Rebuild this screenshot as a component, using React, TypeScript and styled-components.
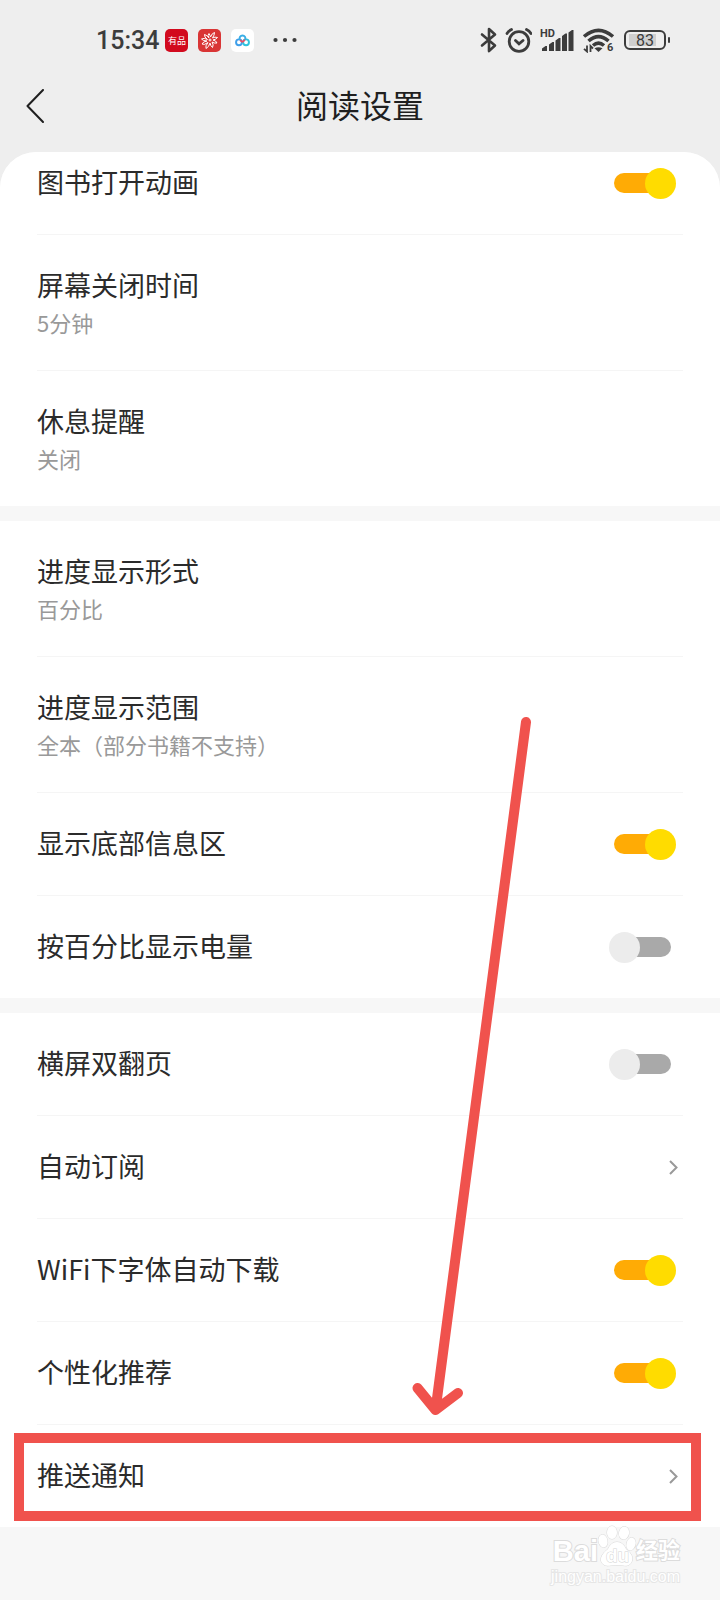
import React, { useState } from "react";
import styled, { createGlobalStyle } from "styled-components";

const GlobalStyle = createGlobalStyle`
  *, *::before, *::after { box-sizing: border-box; }
  body {
    margin: 0;
    background: #eeeeee;
    color: #2b2b2b;
    font-family: "Noto Sans CJK SC", "Noto Sans", sans-serif;
  }
  button { font: inherit; color: inherit; background: none; border: 0; padding: 0; cursor: pointer; }
`;

const Page = styled.div`
  display: flex;
  flex-direction: column;
  min-height: 100vh;
`;

/* ---------- status bar ---------- */

const StatusBar = styled.div`
  display: flex;
  align-items: center;
  justify-content: space-between;
  height: 80px;
  padding: 0 50px 0 96px;
  color: #3c3c3c;
`;

const StatusLeft = styled.div`
  display: flex;
  align-items: center;
  gap: 10px;
`;

const StatusRight = styled.div`
  display: flex;
  align-items: center;
  gap: 8px;
`;

const Clock = styled.time`
  margin-right: -4px;
  padding-top: 2px;
  font: 500 25px/32px Roboto, sans-serif;
`;

const AppBadge = styled.span<{ $bg: string }>`
  display: flex;
  align-items: center;
  justify-content: center;
  width: 23px;
  height: 23px;
  border-radius: 5px;
  background: ${(p) => p.$bg};
  color: #ffffff;
  font-size: 9px;
  line-height: 23px;
`;

const MoreDots = styled.svg`
  margin-left: 9px;
`;

const Battery = styled.span`
  display: flex;
  align-items: center;
  gap: 2px;
  margin-left: 1px;
  &::after {
    content: "";
    width: 2px;
    height: 6px;
    border-radius: 1px;
    background: #3c3c3c;
  }
`;

const BatteryBody = styled.span`
  width: 42px;
  height: 20px;
  border: 2px solid #3c3c3c;
  border-radius: 6px;
  background: linear-gradient(#cfcfcf, #cfcfcf) 3px 2px / 27px 12px no-repeat;
  font: 400 16px/17px Roboto, sans-serif;
  text-align: center;
`;

/* ---------- title bar ---------- */

const TitleBar = styled.header`
  display: grid;
  grid-template-columns: 54px 1fr 54px;
  align-items: center;
  padding: 0 8px 20px;
`;

const BackButton = styled.button`
  display: flex;
  align-items: center;
  justify-content: center;
  height: 52px;
`;

const Title = styled.h1`
  margin: 0;
  padding-bottom: 4px;
  color: #1f1f1f;
  font-size: 32px;
  font-weight: 400;
  line-height: 48px;
  text-align: center;
`;

/* ---------- settings ---------- */

const Sheet = styled.main`
  flex: 1;
  display: flex;
  flex-direction: column;
  gap: 15px;
  overflow: hidden;
  border-radius: 36px 36px 0 0;
  background: #f7f7f7;
`;

const Group = styled.section`
  background: #ffffff;
`;

const Item = styled.div<{ $first?: boolean }>`
  position: relative;
  padding: ${(p) => (p.$first ? "13px" : "33px")} 42px 33px 37px;
  &:not(:first-child) { padding-top: 34px; }
  &:not(:first-child)::before {
    content: "";
    position: absolute;
    top: 0;
    left: 37px;
    right: 37px;
    height: 1px;
    background: #f5f5f5;
  }
`;

const Line = styled.div`
  display: flex;
  align-items: center;
  justify-content: space-between;
  width: 100%;
`;

const LinkLine = styled(Line).attrs({ as: "button" })`
  text-align: left;
`;

const Name = styled.span`
  padding-bottom: 2px;
  font-size: 27px;
  line-height: 34px;
`;

const ValueButton = styled.button`
  display: flex;
  flex-direction: column;
  gap: 2px;
  width: 100%;
  margin-bottom: -1px;
  text-align: left;
`;

const Value = styled.span`
  color: #999999;
  font-size: 22px;
  line-height: 32px;
`;

const Switch = styled.input`
  appearance: none;
  display: grid;
  align-items: center;
  width: 67px;
  height: 31px;
  margin: 0 2px 0 0;
  cursor: pointer;
  &::before, &::after {
    content: "";
    grid-area: 1 / 1;
  }
  &::before {
    height: 20px;
    margin: 0 5px;
    border-radius: 10px;
    background: #a9a9a9;
  }
  &::after {
    width: 31px;
    height: 31px;
    border-radius: 50%;
    background: #ececec;
  }
  &:checked::before { background: #ffab05; }
  &:checked::after { justify-self: end; background: #ffdc00; }
`;

/* ---------- markings over the list ---------- */

const Highlight = styled.div`
  position: absolute;
  inset: 9px 19px 6px 14px;
  border: 10px solid #f0524d;
  pointer-events: none;
`;

const Pointer = styled.svg`
  position: absolute;
  right: 188px;
  bottom: 111px;
  pointer-events: none;
`;

/* ---------- watermark ---------- */

const Footer = styled.footer`
  display: flex;
  flex-direction: column;
  align-items: flex-end;
  margin-top: -15px;
  padding: 0 40px 14px;
  color: #ffffff;
  font-family: "Liberation Sans", "Noto Sans CJK SC", sans-serif;
  -webkit-text-stroke: 2px #dcdcdc;
  paint-order: stroke fill;
`;

const Brand = styled.div`
  display: flex;
  align-items: flex-end;
  height: 40px;
  font-weight: 700;
`;

const BrandText = styled.span<{ $size: number }>`
  font-size: ${(p) => p.$size}px;
  line-height: 32px;
`;

const Paw = styled.svg`
  overflow: visible;
`;

const Site = styled.span`
  font-size: 16px;
  line-height: 20px;
  -webkit-text-stroke: 2px #e6e6e6;
`;

function SwitchRow({ id, name, on, first }: { id: string; name: string; on: boolean; first?: boolean }) {
  const [checked, setChecked] = useState(on);
  return (
    <Item $first={first}>
      <Line>
        <Name as="label" htmlFor={id}>{name}</Name>
        <Switch id={id} type="checkbox" checked={checked} onChange={(e) => setChecked(e.target.checked)} />
      </Line>
    </Item>
  );
}

function ValueRow({ name, value }: { name: string; value: string }) {
  return (
    <Item>
      <ValueButton type="button">
        <Name>{name}</Name>
        <Value>{value}</Value>
      </ValueButton>
    </Item>
  );
}

function LinkRow({ name, children }: { name: string; children?: React.ReactNode }) {
  return (
    <Item>
      <LinkLine>
        <Name>{name}</Name>
        <svg width="9" height="15" viewBox="0 0 9 15" fill="none" stroke="#999999" strokeWidth="2" aria-hidden="true">
          <path d="M1 1l6.500 6.500L1 14" />
        </svg>
      </LinkLine>
      {children}
    </Item>
  );
}

function StatusIcons() {
  return (
    <>
      <svg width="17" height="26" viewBox="0 0 17 26" fill="none" stroke="currentColor" strokeWidth="2.600" strokeLinejoin="round" strokeLinecap="round">
        <path d="M2 7.500L15 18.500L9 24V2L15 7.500L2 18.500" />
      </svg>
      <svg width="27" height="25" viewBox="0 0 27 25" fill="none" stroke="currentColor" strokeWidth="2.800" strokeLinecap="round">
        <circle cx="14" cy="13.500" r="9.800" />
        <path d="M10.500 12.500l3.500 3.300l4-3.300M2 5.500Q3.500 2.800 6.500 1.500M26 5.500Q24.500 2.800 21.500 1.500" />
      </svg>
      <svg width="34" height="24" viewBox="0 0 34 24" fill="currentColor">
        <text x="0" y="9" fontFamily="Roboto, sans-serif" fontSize="11" fontWeight="700">HD</text>
        <path d="M2 23v-2.500l3.500-2.500h1.500v5zM9 23v-6.500l3.500-2.500h1.500V23zM15.500 23V12.500l3.500-2.500h1.500V23zM22 23V8l3.500-2.500H27V23zM28.500 23V4.500L32 2h1.500V23z" />
      </svg>
      <svg width="33" height="25" viewBox="0 0 33 25" fill="none" stroke="currentColor" strokeWidth="3.600">
        <path d="M2 8.500Q16.500-3.800 31 8.500M6.500 13Q16.500 4.300 26.500 13M11 17.500Q16.500 12.800 22 17.500" />
        <path d="M12.500 20.200Q16.500 18.500 20.500 20.200L16.500 24z" fill="currentColor" stroke="none" />
        <path d="M5 17.500v6L2 20.800M8.500 24v-6l2.500 2.500" strokeWidth="1.800" />
        <text x="25" y="23" fill="currentColor" stroke="none" fontFamily="Roboto, sans-serif" fontSize="11" fontWeight="700">6</text>
      </svg>
    </>
  );
}

export default function App() {
  return (
    <Page>
      <GlobalStyle />
      <StatusBar>
        <StatusLeft>
          <Clock>15:34</Clock>
          <AppBadge $bg="#d20a1e">有品</AppBadge>
          <AppBadge $bg="#d93535">
            <svg width="19" height="19" viewBox="0 0 19 19" fill="none" stroke="#ffffff" strokeWidth="1" strokeLinejoin="round">
              <path d="M9 7Q7 4 9 2.500Q10 4 10.500 6Q12 2 14.500 1.500Q14.500 4 12.500 7Q15 5.500 17.500 6.500Q16 8.500 13 9Q16 9.500 17 12Q14 12.500 12 11Q14 14 12.500 16.500Q10.500 15 10 12Q9 16 6 17.500Q5 15 8 11.500Q4 14.500 2 13Q3 10.500 7 10Q3 10 1.500 8Q4 6.500 7.500 8.500Q4 6 4.500 3.500Q7 4 9 7z" />
              <circle cx="10" cy="9" r="1" />
            </svg>
          </AppBadge>
          <AppBadge $bg="#ffffff">
            <svg width="15" height="13" viewBox="0 0 17 14" fill="none" strokeWidth="2.200">
              <circle cx="4.500" cy="9" r="3.300" stroke="#3f9fea" />
              <circle cx="12.500" cy="9" r="3.300" stroke="#2fc2dc" />
              <path d="M5.500 6A3.300 3.300 0 1 1 11.500 6" stroke="#3aaee6" />
              <path d="M6 6.500Q8.500 10.500 11 6" stroke="#ef4b62" />
            </svg>
          </AppBadge>
          <MoreDots width="24" height="6" viewBox="0 0 24 6" fill="currentColor">
            <circle cx="2.500" cy="3" r="2.100" />
            <circle cx="12" cy="3" r="2.100" />
            <circle cx="21.500" cy="3" r="2.100" />
          </MoreDots>
        </StatusLeft>
        <StatusRight>
          <StatusIcons />
          <Battery><BatteryBody>83</BatteryBody></Battery>
        </StatusRight>
      </StatusBar>

      <TitleBar>
        <BackButton type="button" aria-label="返回">
          <svg width="18" height="34" viewBox="0 0 18 34" fill="none" stroke="#1f1f1f" strokeWidth="2" strokeLinecap="round" strokeLinejoin="round">
            <path d="M17 1L1.500 17L17 33" />
          </svg>
        </BackButton>
        <Title>阅读设置</Title>
      </TitleBar>

      <Sheet>
        <Group>
          <SwitchRow id="open-animation" name="图书打开动画" on first />
          <ValueRow name="屏幕关闭时间" value="5分钟" />
          <ValueRow name="休息提醒" value="关闭" />
        </Group>
        <Group>
          <ValueRow name="进度显示形式" value="百分比" />
          <ValueRow name="进度显示范围" value="全本（部分书籍不支持）" />
          <SwitchRow id="bottom-info" name="显示底部信息区" on />
          <SwitchRow id="battery-percent" name="按百分比显示电量" on={false} />
        </Group>
        <Group>
          <SwitchRow id="landscape-pages" name="横屏双翻页" on={false} />
          <LinkRow name="自动订阅" />
          <SwitchRow id="wifi-fonts" name="WiFi下字体自动下载" on />
          <SwitchRow id="recommend" name="个性化推荐" on />
          <LinkRow name="推送通知">
            <Highlight />
            <Pointer width="120" height="700" viewBox="0 0 120 700" fill="none" stroke="#f0524d" strokeWidth="10" strokeLinecap="round" strokeLinejoin="round">
              <path d="M114 6L23.500 694M5.500 672L23.500 694L46 677" />
            </Pointer>
          </LinkRow>
        </Group>
        <Footer>
          <Brand>
            <BrandText $size={29}>Bai</BrandText>
            <Paw width="38" height="38" viewBox="0 0 38 38" fill="#ffffff" stroke="#d9d9d9" strokeWidth="1">
              <ellipse cx="5" cy="12" rx="4.500" ry="6.500" transform="rotate(-12 5 12)" />
              <ellipse cx="14" cy="3.500" rx="5" ry="6.500" />
              <ellipse cx="26" cy="4" rx="5" ry="6.500" transform="rotate(12 26 4)" />
              <ellipse cx="33" cy="15" rx="4.500" ry="6.500" transform="rotate(14 33 15)" />
              <path d="M19 13Q25 13 28 20Q36 26 34 32Q32 38 25 36.500Q19 35.500 13 36.500Q5 38 3 32Q2 26 10 20Q13 13 19 13z" />
              <text x="8" y="33" fontSize="19" fontWeight="700" fill="#ffffff" stroke="#d4d4d4">du</text>
            </Paw>
            <BrandText $size={22}>经验</BrandText>
          </Brand>
          <Site>jingyan.baidu.com</Site>
        </Footer>
      </Sheet>
    </Page>
  );
}
